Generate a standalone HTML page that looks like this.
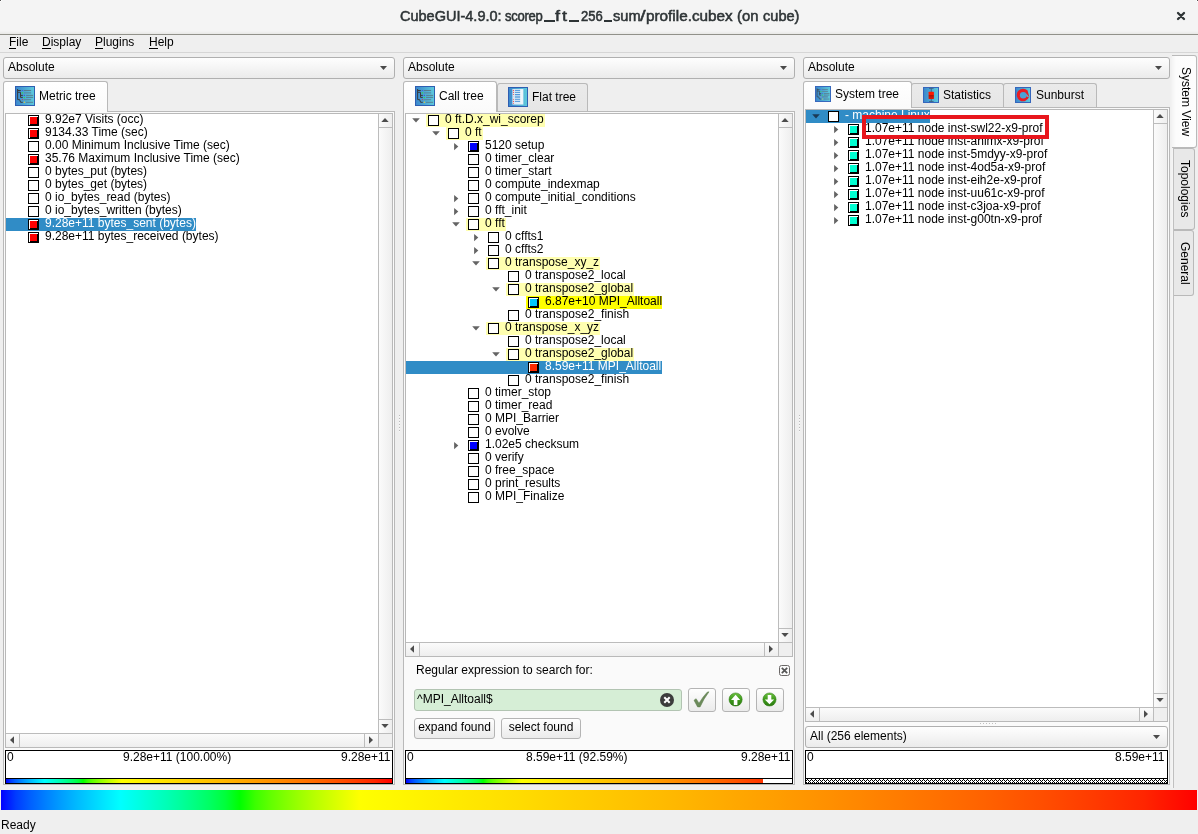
<!DOCTYPE html>
<html><head><meta charset="utf-8"><title>CubeGUI</title>
<style>
*{box-sizing:border-box;margin:0;padding:0}
html,body{width:1198px;height:834px;overflow:hidden;background:#efefef;font-family:"Liberation Sans",sans-serif;font-size:12px;color:#000}
body{position:relative;will-change:transform}
.abs,.t,.ic,.ab,.selrow,.hp,.hy,.combo,.tab,.pane,.tree,.btn,.vbar,.sb,.ln{position:absolute}
.t{white-space:nowrap;line-height:13px;height:13px;font-size:12px}
.w{color:#fff}
.ic{display:block;width:11px;height:11px;border:1px solid #000;background:#fff}
.ic.f{box-shadow:inset 1px 1px 0 #fff,inset -1px -1px 0 #000}
.selrow{background:#308cc6}
.hp{background:#ffffb0;white-space:nowrap;line-height:13px;color:transparent;padding-right:1px}
.hy{background:#ffff00;white-space:nowrap;line-height:13px;color:transparent}
.pad{display:inline-block}
#title{left:0;top:0;width:1198px;height:35px;background:linear-gradient(#f4f4f4 0,#f4f4f4 31px,#e8e8e6 34px);border-bottom:1px solid #91918a}
#titletx{left:0;top:7px;width:1198px;text-align:center;font-size:15px;line-height:18px;color:#2e3436;-webkit-text-stroke:0.3px #2e3436;letter-spacing:0.03px}
#menubar{left:0;top:35px;width:1198px;height:18px;border-bottom:1px solid #d6d6d6;background:#efefef}
.menu{position:absolute;top:36px;line-height:13px;font-size:12px}
.menu u{text-decoration:none;position:relative}.menu u::after{content:'';position:absolute;left:0;right:0;top:13px;height:1px;background:#000}
.combo{height:22px;border:1px solid #b0b0b0;border-radius:3px;background:linear-gradient(#fefefe,#ebebeb);line-height:18px;padding-left:4px}
.pane{border:1px solid #b9b9b9;background:#fafafa}
.tree{border:1px solid #b9b9b9;background:#fff}
.tab{border:1px solid #b9b9b9;border-bottom:none;border-radius:3px 3px 0 0;white-space:nowrap}
.tab.sel{background:linear-gradient(#ffffff,#fafafa)}
.tab.un{background:linear-gradient(#eaeaea,#e6e6e6)}
.sb{background:#f4f4f4}
.sbv{background:linear-gradient(90deg,#fbfbfb,#eeeeee)}
.sbh{background:linear-gradient(#fbfbfb,#eeeeee)}
.ln{background:#bcbcbc}
.btn{border:1px solid #b4b4b4;border-radius:3px;background:linear-gradient(#fefefe,#ebebeb);text-align:center;line-height:17px;white-space:nowrap}
.vbar{border:1px solid #000;background:#fff;height:34px}
.vbar .strip{position:absolute;left:0;right:0;bottom:0;height:5px;border-top:1px solid #000}
.grad{background:linear-gradient(90deg,#0000ff 0.00%,#003bff 1.25%,#0061ff 2.50%,#0080ff 3.75%,#009dff 5.00%,#00b8ff 6.25%,#00d0ff 7.50%,#00e8ff 8.75%,#00ffff 10.00%,#00ffe8 11.25%,#00ffd0 12.50%,#00ffb8 13.75%,#00ff9d 15.00%,#00ff80 16.25%,#00ff61 17.50%,#00ff3b 18.75%,#00ff00 20.00%,#3bff00 21.25%,#61ff00 22.50%,#80ff00 23.75%,#9dff00 25.00%,#b8ff00 26.25%,#d0ff00 27.50%,#e8ff00 28.75%,#ffff00 30.00%,#fff400 34.38%,#ffe800 38.75%,#ffdd00 43.12%,#ffd000 47.50%,#ffc400 51.88%,#ffb800 56.25%,#ffaa00 60.62%,#ff9d00 65.00%,#ff8f00 69.38%,#ff8000 73.75%,#ff7100 78.12%,#ff6100 82.50%,#ff4f00 86.87%,#ff3b00 91.25%,#ff2500 95.62%,#ff0000 100.00%)}
.redbox{position:absolute;left:862px;top:115px;width:187px;height:24px;border:4px solid #e8161c;background:#fff}
.redbox::before{content:"";position:absolute;left:0;top:0;width:64px;height:4px;background:#308cc6}
.tt{position:absolute;top:7px;white-space:nowrap;line-height:18px;font-size:14px;color:#2e3436;-webkit-text-stroke:0.5px #2e3436;transform-origin:0 0}
.vt{position:absolute;white-space:nowrap;line-height:13px;font-size:12px;transform-origin:0 0;transform:rotate(90deg)}
.vtab{position:absolute;border:1px solid #b9b9b9;border-left:none;border-radius:0 3px 3px 0}
</style></head><body>

<div id="title" class="abs"></div>
<span class="tt" style="left:399.70px;transform:scaleX(1.0361);letter-spacing:-0.000px;-webkit-text-stroke-width:0.50px">CubeGUI-4.9.0:</span>
<span class="tt" style="left:505.40px;transform:scaleX(0.9300);letter-spacing:-0.292px;-webkit-text-stroke-width:0.55px">scorep</span>
<span class="tt" style="left:555.40px;transform:scaleX(1.3000);letter-spacing:1.462px;-webkit-text-stroke-width:0.45px">ft</span>
<span class="tt" style="left:580.50px;transform:scaleX(0.9300);letter-spacing:-0.048px;-webkit-text-stroke-width:0.55px">256</span>
<span class="tt" style="left:612.50px;transform:scaleX(1.0462);letter-spacing:-0.000px;-webkit-text-stroke-width:0.50px">sum</span>
<span class="tt" style="left:640.00px;transform:scaleX(1.4500);letter-spacing:0.000px;-webkit-text-stroke-width:0.45px">/</span>
<span class="tt" style="left:645.91px;transform:scaleX(1.0923);letter-spacing:0.000px;-webkit-text-stroke-width:0.50px">profile.cubex</span>
<span class="tt" style="left:736.84px;transform:scaleX(1.0579);letter-spacing:0.000px;-webkit-text-stroke-width:0.50px">(on</span>
<span class="tt" style="left:762.90px;transform:scaleX(1.0412);letter-spacing:0.000px;-webkit-text-stroke-width:0.50px">cube)</span>
<i class="abs" style="left:544px;top:19.5px;width:10.5px;height:2.1px;background:#2e3436"></i>
<i class="abs" style="left:568.5px;top:19.5px;width:10.5px;height:2.1px;background:#2e3436"></i>
<i class="abs" style="left:603.8px;top:19.5px;width:7.9px;height:2.1px;background:#2e3436"></i>
<svg class="abs" style="left:1175px;top:10px" width="12" height="12" viewBox="0 0 12 12"><path d="M3 3 L9 9 M9 3 L3 9" stroke="#2e3436" stroke-width="2.3" stroke-linecap="round"/></svg>

<i class="abs" style="left:0;top:0;width:2px;height:2px;background:#fff"></i><i class="abs" style="left:1px;top:1px;width:1px;height:1px;background:#f4f4f4"></i><i class="abs" style="left:0;top:0;width:1px;height:1px;background:#555"></i>
<i class="abs" style="left:1196px;top:0;width:2px;height:2px;background:#fff"></i><i class="abs" style="left:1196px;top:1px;width:1px;height:1px;background:#f4f4f4"></i><i class="abs" style="left:1197px;top:0;width:1px;height:1px;background:#555"></i>
<div id="menubar" class="abs"></div>
<span class="menu" style="left:9px"><u>F</u>ile</span>
<span class="menu" style="left:42px"><u>D</u>isplay</span>
<span class="menu" style="left:95px"><u>P</u>lugins</span>
<span class="menu" style="left:149px"><u>H</u>elp</span>

<!-- LEFT PANEL -->
<div class="combo" style="left:3px;top:57px;width:392px">Absolute</div>
<svg class="ab" style="left:380px;top:66px" width="7" height="4" viewBox="0 0 7 4"><path d="M0 0 L7 0 L3.5 4 Z" fill="#4a4a4a"/></svg>
<div class="pane" style="left:3px;top:111px;width:392px;height:674px"></div>
<div class="tab sel" style="left:3px;top:81px;width:105px;height:31px"></div>
<svg class="ab" style="left:15px;top:86px" width="20" height="20" viewBox="0 0 20 20"><defs><linearGradient id="tg" x1="0" y1="0" x2="1" y2="0"><stop offset="0" stop-color="#3a86cc"/><stop offset="1" stop-color="#5fcbdc"/></linearGradient></defs><rect x="0.5" y="0.5" width="19" height="19" fill="url(#tg)" stroke="#2e5eb2"/><path d="M2.6 3 V13.6 H4.6 L5.6 16.3 H7.8 M2.6 4.5 H5.8 M2.6 6.3 H5.5 V11.4 H7.8 M5.5 9.4 H7.8" fill="none" stroke="#3a3a3c" stroke-width="1"/><g stroke="#58707e" stroke-width="0.8"><path d="M8.9 4.5 H16.1 M11.1 9.4 H18.1 M11.1 11.4 H18.1 M11.1 16.3 H18.1"/></g><g stroke="#5a8ba4" stroke-width="1.4"><path d="M8.9 6.9 H16.1 M8.9 13.6 H16.1"/></g><circle cx="7.4" cy="4.5" r="0.6" fill="#3c55e0"/><circle cx="7.4" cy="6.9" r="0.8" fill="#33d45a"/><circle cx="9.4" cy="9.4" r="0.6" fill="#3c55e0"/><circle cx="9.4" cy="11.4" r="0.75" fill="#2fe04a"/><circle cx="7.4" cy="13.6" r="0.65" fill="#d03a4a"/><circle cx="9.4" cy="16.3" r="0.7" fill="#e6c838"/></svg>
<span class="t" style="left:39px;top:90px">Metric tree</span>
<div class="tree" style="left:5px;top:113px;width:388px;height:635px"></div>
<div class="abs sbv" style="left:379px;top:114px;width:13px;height:619px"></div>
<div class="abs sbh" style="left:6px;top:734px;width:372px;height:13px"></div>
<div class="abs" style="left:379px;top:734px;width:13px;height:13px;background:#efefef"></div>
<div class="ln" style="left:378px;top:114px;width:1px;height:633px"></div>
<div class="ln" style="left:6px;top:733px;width:386px;height:1px"></div>
<div class="ln" style="left:379px;top:127px;width:13px;height:1px"></div>
<div class="ln" style="left:379px;top:719px;width:13px;height:1px"></div>
<div class="ln" style="left:19px;top:734px;width:1px;height:13px"></div>
<div class="ln" style="left:364px;top:734px;width:1px;height:13px"></div>
<svg class="ab" style="left:381px;top:118px" width="8" height="4" viewBox="0 0 8 4"><path d="M0.3 4 L7.7 4 L4 0 Z" fill="#4d4d4d"/></svg>
<svg class="ab" style="left:381px;top:724px" width="8" height="4" viewBox="0 0 8 4"><path d="M0.3 0 L7.7 0 L4 4 Z" fill="#4d4d4d"/></svg>
<svg class="ab" style="left:10px;top:736px" width="4" height="8" viewBox="0 0 4 8"><path d="M4 0.3 L4 7.7 L0 4 Z" fill="#4d4d4d"/></svg>
<svg class="ab" style="left:369px;top:736px" width="4" height="8" viewBox="0 0 4 8"><path d="M0 0.3 L0 7.7 L4 4 Z" fill="#4d4d4d"/></svg>
<i class="ic f" style="left:28px;top:115px;background:#ff0000"></i>
<span class="t" style="left:45px;top:113px">9.92e7 Visits (occ)</span>
<i class="ic f" style="left:28px;top:128px;background:#ff0000"></i>
<span class="t" style="left:45px;top:126px">9134.33 Time (sec)</span>
<i class="ic" style="left:28px;top:141px"></i>
<span class="t" style="left:45px;top:139px">0.00 Minimum Inclusive Time (sec)</span>
<i class="ic f" style="left:28px;top:154px;background:#ff0000"></i>
<span class="t" style="left:45px;top:152px">35.76 Maximum Inclusive Time (sec)</span>
<i class="ic" style="left:28px;top:167px"></i>
<span class="t" style="left:45px;top:165px">0 bytes_put (bytes)</span>
<i class="ic" style="left:28px;top:180px"></i>
<span class="t" style="left:45px;top:178px">0 bytes_get (bytes)</span>
<i class="ic" style="left:28px;top:193px"></i>
<span class="t" style="left:45px;top:191px">0 io_bytes_read (bytes)</span>
<i class="ic" style="left:28px;top:206px"></i>
<span class="t" style="left:45px;top:204px">0 io_bytes_written (bytes)</span>
<div class="selrow" style="left:6px;top:218px;width:190px;height:13px"></div>
<i class="ic f" style="left:28px;top:219px;background:#ff0000"></i>
<span class="t w" style="left:45px;top:217px">9.28e+11 bytes_sent (bytes)</span>
<i class="ic f" style="left:28px;top:232px;background:#ff0000"></i>
<span class="t" style="left:45px;top:230px">9.28e+11 bytes_received (bytes)</span>

<!-- MIDDLE PANEL -->
<div class="combo" style="left:403px;top:57px;width:392px">Absolute</div>
<svg class="ab" style="left:780px;top:66px" width="7" height="4" viewBox="0 0 7 4"><path d="M0 0 L7 0 L3.5 4 Z" fill="#4a4a4a"/></svg>
<div class="pane" style="left:403px;top:111px;width:392px;height:674px"></div>
<div class="tab un" style="left:497px;top:83px;width:91px;height:28px"></div>
<div class="tab sel" style="left:403px;top:81px;width:94px;height:31px"></div>
<svg class="ab" style="left:415px;top:86px" width="20" height="20" viewBox="0 0 20 20"><defs><linearGradient id="tg" x1="0" y1="0" x2="1" y2="0"><stop offset="0" stop-color="#3a86cc"/><stop offset="1" stop-color="#5fcbdc"/></linearGradient></defs><rect x="0.5" y="0.5" width="19" height="19" fill="url(#tg)" stroke="#2e5eb2"/><path d="M2.6 3 V13.6 H4.6 L5.6 16.3 H7.8 M2.6 4.5 H5.8 M2.6 6.3 H5.5 V11.4 H7.8 M5.5 9.4 H7.8" fill="none" stroke="#3a3a3c" stroke-width="1"/><g stroke="#58707e" stroke-width="0.8"><path d="M8.9 4.5 H16.1 M11.1 9.4 H18.1 M11.1 11.4 H18.1 M11.1 16.3 H18.1"/></g><g stroke="#5a8ba4" stroke-width="1.4"><path d="M8.9 6.9 H16.1 M8.9 13.6 H16.1"/></g><circle cx="7.4" cy="4.5" r="0.6" fill="#3c55e0"/><circle cx="7.4" cy="6.9" r="0.8" fill="#33d45a"/><circle cx="9.4" cy="9.4" r="0.6" fill="#3c55e0"/><circle cx="9.4" cy="11.4" r="0.75" fill="#2fe04a"/><circle cx="7.4" cy="13.6" r="0.65" fill="#d03a4a"/><circle cx="9.4" cy="16.3" r="0.7" fill="#e6c838"/></svg>
<svg class="ab" style="left:508px;top:87px" width="20" height="20" viewBox="0 0 20 20"><rect x="0.5" y="0.5" width="19" height="19" fill="url(#tg)" stroke="#2e5eb2"/><rect x="4.4" y="2" width="11" height="15.6" fill="#dcecf8"/><rect x="12.3" y="2.6" width="2.6" height="14.4" fill="#eef6fb"/><g stroke="#3f8fd8" stroke-width="0.9"><path d="M6.9 3.4 H12.1 M6.9 5.4 H12.1 M6.9 7.5 H12.1 M6.9 12.3 H12.1 M6.9 14.4 H12.1"/></g><rect x="6.9" y="8.6" width="5.2" height="2.4" fill="#7fb4e4"/><g fill="#f04545"><circle cx="5.4" cy="3.4" r="0.55"/><circle cx="5.4" cy="5.4" r="0.55"/><circle cx="5.4" cy="7.5" r="0.55"/><circle cx="5.4" cy="9.8" r="0.4" opacity="0.6"/><circle cx="5.4" cy="12.3" r="0.55"/><circle cx="5.4" cy="14.4" r="0.55"/><circle cx="5.4" cy="16.3" r="0.55"/></g></svg>
<span class="t" style="left:439px;top:90px">Call tree</span>
<span class="t" style="left:532px;top:91px">Flat tree</span>
<div class="tree" style="left:405px;top:113px;width:388px;height:544px"></div>
<div class="abs sbv" style="left:779px;top:114px;width:13px;height:528px"></div>
<div class="abs sbh" style="left:406px;top:643px;width:372px;height:13px"></div>
<div class="abs" style="left:779px;top:643px;width:13px;height:13px;background:#efefef"></div>
<div class="ln" style="left:778px;top:114px;width:1px;height:542px"></div>
<div class="ln" style="left:406px;top:642px;width:386px;height:1px"></div>
<div class="ln" style="left:779px;top:127px;width:13px;height:1px"></div>
<div class="ln" style="left:779px;top:628px;width:13px;height:1px"></div>
<div class="ln" style="left:419px;top:643px;width:1px;height:13px"></div>
<div class="ln" style="left:764px;top:643px;width:1px;height:13px"></div>
<svg class="ab" style="left:781px;top:118px" width="8" height="4" viewBox="0 0 8 4"><path d="M0.3 4 L7.7 4 L4 0 Z" fill="#4d4d4d"/></svg>
<svg class="ab" style="left:781px;top:633px" width="8" height="4" viewBox="0 0 8 4"><path d="M0.3 0 L7.7 0 L4 4 Z" fill="#4d4d4d"/></svg>
<svg class="ab" style="left:410px;top:645px" width="4" height="8" viewBox="0 0 4 8"><path d="M4 0.3 L4 7.7 L0 4 Z" fill="#4d4d4d"/></svg>
<svg class="ab" style="left:769px;top:645px" width="4" height="8" viewBox="0 0 4 8"><path d="M0 0.3 L0 7.7 L4 4 Z" fill="#4d4d4d"/></svg>
<div class="hp" style="left:426px;top:114px;height:13px" ><span class="pad" style="padding-left:19px">0 ft.D.x_wi_scorep</span></div>
<svg class="ab" style="left:412px;top:118px" width="8" height="5" viewBox="0 0 8 5"><path d="M0.2 0.2 L7.8 0.2 L4 4.5 Z" fill="#646464"/></svg>
<i class="ic" style="left:428px;top:115px"></i>
<span class="t" style="left:445px;top:113px">0 ft.D.x_wi_scorep</span>
<div class="hp" style="left:446px;top:127px;height:13px" ><span class="pad" style="padding-left:19px">0 ft</span></div>
<svg class="ab" style="left:432px;top:131px" width="8" height="5" viewBox="0 0 8 5"><path d="M0.2 0.2 L7.8 0.2 L4 4.5 Z" fill="#646464"/></svg>
<i class="ic" style="left:448px;top:128px"></i>
<span class="t" style="left:465px;top:126px">0 ft</span>
<svg class="ab" style="left:454px;top:143px" width="5" height="8" viewBox="0 0 5 8"><path d="M0.1 0 L0.1 7.2 L4.3 3.6 Z" fill="#646464"/></svg>
<i class="ic f" style="left:468px;top:141px;background:#0000ff"></i>
<span class="t" style="left:485px;top:139px">5120 setup</span>
<i class="ic" style="left:468px;top:154px"></i>
<span class="t" style="left:485px;top:152px">0 timer_clear</span>
<i class="ic" style="left:468px;top:167px"></i>
<span class="t" style="left:485px;top:165px">0 timer_start</span>
<i class="ic" style="left:468px;top:180px"></i>
<span class="t" style="left:485px;top:178px">0 compute_indexmap</span>
<svg class="ab" style="left:454px;top:195px" width="5" height="8" viewBox="0 0 5 8"><path d="M0.1 0 L0.1 7.2 L4.3 3.6 Z" fill="#646464"/></svg>
<i class="ic" style="left:468px;top:193px"></i>
<span class="t" style="left:485px;top:191px">0 compute_initial_conditions</span>
<svg class="ab" style="left:454px;top:208px" width="5" height="8" viewBox="0 0 5 8"><path d="M0.1 0 L0.1 7.2 L4.3 3.6 Z" fill="#646464"/></svg>
<i class="ic" style="left:468px;top:206px"></i>
<span class="t" style="left:485px;top:204px">0 fft_init</span>
<div class="hp" style="left:466px;top:218px;height:13px" ><span class="pad" style="padding-left:19px">0 fft</span></div>
<svg class="ab" style="left:452px;top:222px" width="8" height="5" viewBox="0 0 8 5"><path d="M0.2 0.2 L7.8 0.2 L4 4.5 Z" fill="#646464"/></svg>
<i class="ic" style="left:468px;top:219px"></i>
<span class="t" style="left:485px;top:217px">0 fft</span>
<svg class="ab" style="left:474px;top:234px" width="5" height="8" viewBox="0 0 5 8"><path d="M0.1 0 L0.1 7.2 L4.3 3.6 Z" fill="#646464"/></svg>
<i class="ic" style="left:488px;top:232px"></i>
<span class="t" style="left:505px;top:230px">0 cffts1</span>
<svg class="ab" style="left:474px;top:247px" width="5" height="8" viewBox="0 0 5 8"><path d="M0.1 0 L0.1 7.2 L4.3 3.6 Z" fill="#646464"/></svg>
<i class="ic" style="left:488px;top:245px"></i>
<span class="t" style="left:505px;top:243px">0 cffts2</span>
<div class="hp" style="left:486px;top:257px;height:13px" ><span class="pad" style="padding-left:19px">0 transpose_xy_z</span></div>
<svg class="ab" style="left:472px;top:261px" width="8" height="5" viewBox="0 0 8 5"><path d="M0.2 0.2 L7.8 0.2 L4 4.5 Z" fill="#646464"/></svg>
<i class="ic" style="left:488px;top:258px"></i>
<span class="t" style="left:505px;top:256px">0 transpose_xy_z</span>
<i class="ic" style="left:508px;top:271px"></i>
<span class="t" style="left:525px;top:269px">0 transpose2_local</span>
<div class="hp" style="left:506px;top:283px;height:13px" ><span class="pad" style="padding-left:19px">0 transpose2_global</span></div>
<svg class="ab" style="left:492px;top:287px" width="8" height="5" viewBox="0 0 8 5"><path d="M0.2 0.2 L7.8 0.2 L4 4.5 Z" fill="#646464"/></svg>
<i class="ic" style="left:508px;top:284px"></i>
<span class="t" style="left:525px;top:282px">0 transpose2_global</span>
<div class="hy" style="left:526px;top:296px;height:13px" ><span class="pad" style="padding-left:19px">6.87e+10 MPI_Alltoall</span></div>
<i class="ic f" style="left:528px;top:297px;background:#00c8ff"></i>
<span class="t" style="left:545px;top:295px">6.87e+10 MPI_Alltoall</span>
<i class="ic" style="left:508px;top:310px"></i>
<span class="t" style="left:525px;top:308px">0 transpose2_finish</span>
<div class="hp" style="left:486px;top:322px;height:13px" ><span class="pad" style="padding-left:19px">0 transpose_x_yz</span></div>
<svg class="ab" style="left:472px;top:326px" width="8" height="5" viewBox="0 0 8 5"><path d="M0.2 0.2 L7.8 0.2 L4 4.5 Z" fill="#646464"/></svg>
<i class="ic" style="left:488px;top:323px"></i>
<span class="t" style="left:505px;top:321px">0 transpose_x_yz</span>
<i class="ic" style="left:508px;top:336px"></i>
<span class="t" style="left:525px;top:334px">0 transpose2_local</span>
<div class="hp" style="left:506px;top:348px;height:13px" ><span class="pad" style="padding-left:19px">0 transpose2_global</span></div>
<svg class="ab" style="left:492px;top:352px" width="8" height="5" viewBox="0 0 8 5"><path d="M0.2 0.2 L7.8 0.2 L4 4.5 Z" fill="#646464"/></svg>
<i class="ic" style="left:508px;top:349px"></i>
<span class="t" style="left:525px;top:347px">0 transpose2_global</span>
<div class="selrow" style="left:406px;top:361px;width:256px;height:13px"></div>
<i class="ic f" style="left:528px;top:362px;background:#ff2a00"></i>
<span class="t w" style="left:545px;top:360px">8.59e+11 MPI_Alltoall</span>
<i class="ic" style="left:508px;top:375px"></i>
<span class="t" style="left:525px;top:373px">0 transpose2_finish</span>
<i class="ic" style="left:468px;top:388px"></i>
<span class="t" style="left:485px;top:386px">0 timer_stop</span>
<i class="ic" style="left:468px;top:401px"></i>
<span class="t" style="left:485px;top:399px">0 timer_read</span>
<i class="ic" style="left:468px;top:414px"></i>
<span class="t" style="left:485px;top:412px">0 MPI_Barrier</span>
<i class="ic" style="left:468px;top:427px"></i>
<span class="t" style="left:485px;top:425px">0 evolve</span>
<svg class="ab" style="left:454px;top:442px" width="5" height="8" viewBox="0 0 5 8"><path d="M0.1 0 L0.1 7.2 L4.3 3.6 Z" fill="#646464"/></svg>
<i class="ic f" style="left:468px;top:440px;background:#0000ff"></i>
<span class="t" style="left:485px;top:438px">1.02e5 checksum</span>
<i class="ic" style="left:468px;top:453px"></i>
<span class="t" style="left:485px;top:451px">0 verify</span>
<i class="ic" style="left:468px;top:466px"></i>
<span class="t" style="left:485px;top:464px">0 free_space</span>
<i class="ic" style="left:468px;top:479px"></i>
<span class="t" style="left:485px;top:477px">0 print_results</span>
<i class="ic" style="left:468px;top:492px"></i>
<span class="t" style="left:485px;top:490px">0 MPI_Finalize</span>
<!-- search -->
<span class="t" style="left:416px;top:664px">Regular expression to search for:</span>
<svg class="abs" style="left:779px;top:665px" width="11" height="11" viewBox="0 0 11 11"><rect x="0.5" y="0.5" width="10" height="10" rx="2" fill="#fafafa" stroke="#6a6766"/><path d="M2.8 2.8 L8.2 8.2 M8.2 2.8 L2.8 8.2" stroke="#555" stroke-width="1.7"/></svg>
<div class="abs" style="left:414px;top:689px;width:268px;height:22px;border:1px solid #b2c4b2;border-radius:3px;background:#d6eed6"></div>
<span class="t" style="left:417px;top:693px">^MPI_Alltoall$</span>
<svg class="abs" style="left:660px;top:693px" width="14" height="14" viewBox="0 0 14 14"><circle cx="7" cy="7" r="7" fill="#3c3c3c"/><path d="M4.3 4.3 L9.7 9.7 M9.7 4.3 L4.3 9.7" stroke="#fff" stroke-width="2"/></svg>
<div class="btn" style="left:688px;top:688px;width:28px;height:24px"></div>
<div class="btn" style="left:722px;top:688px;width:28px;height:24px"></div>
<div class="btn" style="left:756px;top:688px;width:28px;height:24px"></div>
<svg class="abs" style="left:692px;top:690px" width="20" height="20" viewBox="0 0 20 20"><path d="M2.0 10.3 L4.1 8.7 L7.0 13.2 Q11 6.5 15.2 2.2 L17.0 1.8 Q11.6 9 8.1 16.9 L5.6 16.9 Z" fill="#6b8a5a" stroke="#5a7a4a" stroke-width="0.5"/></svg>
<svg class="abs" style="left:728px;top:692px" width="15" height="15" viewBox="0 0 15 15"><defs><linearGradient id="gg" x1="0" y1="0" x2="0" y2="1"><stop offset="0" stop-color="#6cc040"/><stop offset="0.5" stop-color="#3f9a1c"/><stop offset="1" stop-color="#2c7a10"/></linearGradient></defs><circle cx="7.6" cy="7.5" r="6.6" fill="url(#gg)" stroke="#2f7a14" stroke-width="0.5"/><path d="M7.6 2.8 L12.2 7.9 L9.4 7.9 L9.4 12.9 L5.8 12.9 L5.8 7.9 L3.0 7.9 Z" fill="#fff"/></svg>
<svg class="abs" style="left:762px;top:692px" width="15" height="15" viewBox="0 0 15 15"><circle cx="7.5" cy="7.5" r="6.6" fill="url(#gg)" stroke="#2f7a14" stroke-width="0.5"/><path d="M7.5 12.3 L12.2 7.5 L9.3 7.5 L9.3 2.9 L5.7 2.9 L5.7 7.5 L2.8 7.5 Z" fill="#fff"/></svg>
<div class="btn" style="left:414px;top:718px;width:81px;height:21px">expand found</div>
<div class="btn" style="left:501px;top:718px;width:80px;height:21px">select found</div>

<!-- RIGHT PANEL -->
<div class="combo" style="left:803px;top:57px;width:367px">Absolute</div>
<svg class="ab" style="left:1155px;top:66px" width="7" height="4" viewBox="0 0 7 4"><path d="M0 0 L7 0 L3.5 4 Z" fill="#4a4a4a"/></svg>
<div class="pane" style="left:803px;top:107px;width:367px;height:678px"></div>
<div class="tab un" style="left:911px;top:83px;width:93px;height:24px"></div>
<div class="tab un" style="left:1003px;top:83px;width:94px;height:24px"></div>
<div class="tab sel" style="left:803px;top:81px;width:109px;height:27px"></div>
<svg class="ab" style="left:815px;top:86px" width="16" height="16" viewBox="0 0 20 20"><rect x="0.6" y="0.6" width="18.8" height="18.8" fill="url(#tg)" stroke="#3666bc" stroke-width="1.25"/><path d="M2.6 3 V13.6 H4.6 L5.6 16.3 H7.8 M2.6 4.5 H5.8 M2.6 6.3 H5.5 V11.4 H7.8 M5.5 9.4 H7.8" fill="none" stroke="#3a3a3c" stroke-width="1" opacity="0.8"/><g stroke="#58707e" stroke-width="0.8"><path d="M8.9 4.5 H16.1 M11.1 9.4 H18.1 M11.1 11.4 H18.1 M11.1 16.3 H18.1"/></g><g stroke="#5a8ba4" stroke-width="1.4"><path d="M8.9 6.9 H16.1 M8.9 13.6 H16.1"/></g><circle cx="7.4" cy="4.5" r="0.6" fill="#3c55e0"/><circle cx="7.4" cy="6.9" r="0.8" fill="#33d45a"/><circle cx="9.4" cy="9.4" r="0.6" fill="#3c55e0"/><circle cx="9.4" cy="11.4" r="0.75" fill="#2fe04a"/><circle cx="7.4" cy="13.6" r="0.65" fill="#9a8ac0"/><circle cx="9.4" cy="16.3" r="0.7" fill="#e6c838"/></svg>
<svg class="ab" style="left:923px;top:87px" width="16" height="16" viewBox="0 0 16 16"><defs><linearGradient id="rg" x1="0" y1="0" x2="0" y2="1"><stop offset="0" stop-color="#ff1a00"/><stop offset="0.45" stop-color="#fb1800"/><stop offset="0.5" stop-color="#b01404"/><stop offset="1" stop-color="#e01808"/></linearGradient></defs><rect x="0.5" y="0.5" width="15" height="15" fill="url(#tg)" stroke="#3666bc"/><path d="M8.3 1.3 V14.6 M6 1.4 H10.6 M6 14.5 H10.6" stroke="#3c5a7a" stroke-width="0.8" fill="none"/><rect x="5.6" y="4.7" width="5.3" height="7.2" rx="0.5" fill="url(#rg)"/></svg>
<svg class="ab" style="left:1015px;top:87px" width="16" height="16" viewBox="0 0 16 16"><rect x="0.5" y="0.5" width="15" height="15" fill="url(#tg)" stroke="#3666bc"/><path d="M13.9 10.3 A6.3 6.3 0 1 1 12.6 3.6 L14.3 10 Z" fill="#e81c24"/><circle cx="8.2" cy="8.2" r="3.3" fill="#4aa2d6"/><path d="M11.2 6.6 L14.6 10.4 L11.4 9.6 Z" fill="#55b4d8"/></svg>
<span class="t" style="left:835px;top:88px">System tree</span>
<span class="t" style="left:943px;top:89px">Statistics</span>
<span class="t" style="left:1036px;top:89px">Sunburst</span>
<div class="tree" style="left:805px;top:109px;width:363px;height:613px"></div>
<div class="abs sbv" style="left:1154px;top:110px;width:13px;height:597px"></div>
<div class="abs sbh" style="left:806px;top:708px;width:347px;height:13px"></div>
<div class="abs" style="left:1154px;top:708px;width:13px;height:13px;background:#efefef"></div>
<div class="ln" style="left:1153px;top:110px;width:1px;height:611px"></div>
<div class="ln" style="left:806px;top:707px;width:361px;height:1px"></div>
<div class="ln" style="left:1154px;top:123px;width:13px;height:1px"></div>
<div class="ln" style="left:1154px;top:693px;width:13px;height:1px"></div>
<div class="ln" style="left:819px;top:708px;width:1px;height:13px"></div>
<div class="ln" style="left:1139px;top:708px;width:1px;height:13px"></div>
<svg class="ab" style="left:1156px;top:114px" width="8" height="4" viewBox="0 0 8 4"><path d="M0.3 4 L7.7 4 L4 0 Z" fill="#4d4d4d"/></svg>
<svg class="ab" style="left:1156px;top:698px" width="8" height="4" viewBox="0 0 8 4"><path d="M0.3 0 L7.7 0 L4 4 Z" fill="#4d4d4d"/></svg>
<svg class="ab" style="left:810px;top:710px" width="4" height="8" viewBox="0 0 4 8"><path d="M4 0.3 L4 7.7 L0 4 Z" fill="#4d4d4d"/></svg>
<svg class="ab" style="left:1144px;top:710px" width="4" height="8" viewBox="0 0 4 8"><path d="M0 0.3 L0 7.7 L4 4 Z" fill="#4d4d4d"/></svg>
<div class="selrow" style="left:806px;top:110px;width:124px;height:13px"></div>
<svg class="ab" style="left:812px;top:114px" width="8" height="5" viewBox="0 0 8 5"><path d="M0.2 0.2 L7.8 0.2 L4 4.5 Z" fill="#1b3a55"/></svg>
<i class="ic" style="left:828px;top:111px"></i>
<span class="t w" style="left:845px;top:109px">- machine Linux</span>
<svg class="ab" style="left:834px;top:126px" width="5" height="8" viewBox="0 0 5 8"><path d="M0.1 0 L0.1 7.2 L4.3 3.6 Z" fill="#646464"/></svg>
<i class="ic f" style="left:848px;top:124px;background:#00ffd2"></i>
<span class="t" style="left:865px;top:122px">1.07e+11 node inst-swl22-x9-prof</span>
<svg class="ab" style="left:834px;top:139px" width="5" height="8" viewBox="0 0 5 8"><path d="M0.1 0 L0.1 7.2 L4.3 3.6 Z" fill="#646464"/></svg>
<i class="ic f" style="left:848px;top:137px;background:#00ffd2"></i>
<span class="t" style="left:865px;top:135px">1.07e+11 node inst-ahlmx-x9-prof</span>
<svg class="ab" style="left:834px;top:152px" width="5" height="8" viewBox="0 0 5 8"><path d="M0.1 0 L0.1 7.2 L4.3 3.6 Z" fill="#646464"/></svg>
<i class="ic f" style="left:848px;top:150px;background:#00ffd2"></i>
<span class="t" style="left:865px;top:148px">1.07e+11 node inst-5mdyy-x9-prof</span>
<svg class="ab" style="left:834px;top:165px" width="5" height="8" viewBox="0 0 5 8"><path d="M0.1 0 L0.1 7.2 L4.3 3.6 Z" fill="#646464"/></svg>
<i class="ic f" style="left:848px;top:163px;background:#00ffd2"></i>
<span class="t" style="left:865px;top:161px">1.07e+11 node inst-4od5a-x9-prof</span>
<svg class="ab" style="left:834px;top:178px" width="5" height="8" viewBox="0 0 5 8"><path d="M0.1 0 L0.1 7.2 L4.3 3.6 Z" fill="#646464"/></svg>
<i class="ic f" style="left:848px;top:176px;background:#00ffd2"></i>
<span class="t" style="left:865px;top:174px">1.07e+11 node inst-eih2e-x9-prof</span>
<svg class="ab" style="left:834px;top:191px" width="5" height="8" viewBox="0 0 5 8"><path d="M0.1 0 L0.1 7.2 L4.3 3.6 Z" fill="#646464"/></svg>
<i class="ic f" style="left:848px;top:189px;background:#00ffd2"></i>
<span class="t" style="left:865px;top:187px">1.07e+11 node inst-uu61c-x9-prof</span>
<svg class="ab" style="left:834px;top:204px" width="5" height="8" viewBox="0 0 5 8"><path d="M0.1 0 L0.1 7.2 L4.3 3.6 Z" fill="#646464"/></svg>
<i class="ic f" style="left:848px;top:202px;background:#00ffd2"></i>
<span class="t" style="left:865px;top:200px">1.07e+11 node inst-c3joa-x9-prof</span>
<svg class="ab" style="left:834px;top:217px" width="5" height="8" viewBox="0 0 5 8"><path d="M0.1 0 L0.1 7.2 L4.3 3.6 Z" fill="#646464"/></svg>
<i class="ic f" style="left:848px;top:215px;background:#00ffd2"></i>
<span class="t" style="left:865px;top:213px">1.07e+11 node inst-g00tn-x9-prof</span>
<div class="redbox"></div>
<span class="t" style="left:865px;top:122px">1.07e+11 node inst-swl22-x9-prof</span>
<div class="combo" style="left:805px;top:726px;width:363px">All (256 elements)</div>
<svg class="ab" style="left:1153px;top:735px" width="7" height="4" viewBox="0 0 7 4"><path d="M0 0 L7 0 L3.5 4 Z" fill="#4a4a4a"/></svg>

<!-- splitter dots -->
<i class="abs" style="left:399px;top:415px;width:1px;height:1px;background:#bcbcbc;box-shadow:0 1px 0 #f8f8f8"></i>
<i class="abs" style="left:399px;top:418px;width:1px;height:1px;background:#bcbcbc;box-shadow:0 1px 0 #f8f8f8"></i>
<i class="abs" style="left:399px;top:421px;width:1px;height:1px;background:#bcbcbc;box-shadow:0 1px 0 #f8f8f8"></i>
<i class="abs" style="left:399px;top:424px;width:1px;height:1px;background:#bcbcbc;box-shadow:0 1px 0 #f8f8f8"></i>
<i class="abs" style="left:399px;top:427px;width:1px;height:1px;background:#bcbcbc;box-shadow:0 1px 0 #f8f8f8"></i>
<i class="abs" style="left:399px;top:430px;width:1px;height:1px;background:#bcbcbc;box-shadow:0 1px 0 #f8f8f8"></i>
<i class="abs" style="left:799px;top:415px;width:1px;height:1px;background:#bcbcbc;box-shadow:0 1px 0 #f8f8f8"></i>
<i class="abs" style="left:799px;top:418px;width:1px;height:1px;background:#bcbcbc;box-shadow:0 1px 0 #f8f8f8"></i>
<i class="abs" style="left:799px;top:421px;width:1px;height:1px;background:#bcbcbc;box-shadow:0 1px 0 #f8f8f8"></i>
<i class="abs" style="left:799px;top:424px;width:1px;height:1px;background:#bcbcbc;box-shadow:0 1px 0 #f8f8f8"></i>
<i class="abs" style="left:799px;top:427px;width:1px;height:1px;background:#bcbcbc;box-shadow:0 1px 0 #f8f8f8"></i>
<i class="abs" style="left:799px;top:430px;width:1px;height:1px;background:#bcbcbc;box-shadow:0 1px 0 #f8f8f8"></i>
<i class="abs" style="left:980px;top:723px;width:1px;height:1px;background:#c0c0c0"></i>
<i class="abs" style="left:983px;top:723px;width:1px;height:1px;background:#c0c0c0"></i>
<i class="abs" style="left:986px;top:723px;width:1px;height:1px;background:#c0c0c0"></i>
<i class="abs" style="left:989px;top:723px;width:1px;height:1px;background:#c0c0c0"></i>
<i class="abs" style="left:992px;top:723px;width:1px;height:1px;background:#c0c0c0"></i>
<i class="abs" style="left:995px;top:723px;width:1px;height:1px;background:#c0c0c0"></i>
<!-- side tabs -->
<div class="abs" style="left:1170px;top:58px;width:3px;height:730px;background:linear-gradient(90deg,#efefef,#f5f5f5)"></div>
<div class="ln" style="left:1173px;top:148px;width:1px;height:640px;background:#c0c0c0"></div>
<div class="vtab" style="left:1174px;top:148px;width:21px;height:82px;background:#e8e8e8"></div>
<div class="vtab" style="left:1174px;top:230px;width:20px;height:66px;background:#e8e8e8"></div>
<div class="vtab" style="left:1172px;top:55px;width:25px;height:93px;background:linear-gradient(90deg,#f4f4f4,#fcfcfc 4px,#fdfdfd)"></div>
<span class="vt" style="left:1192px;top:67px">System View</span>
<span class="vt" style="left:1191px;top:160px">Topologies</span>
<span class="vt" style="left:1191px;top:242px">General</span>

<!-- value bars -->
<div class="vbar" style="left:5px;top:750px;width:388px"><div class="strip grad"></div></div>
<div class="vbar" style="left:405px;top:750px;width:388px"><div class="strip"><div class="grad" style="position:absolute;left:0;top:0;height:4px;width:386px"></div><div style="position:absolute;left:357px;top:0;width:29px;height:4px;background:#fff"></div></div></div>
<div class="vbar" style="left:805px;top:750px;width:363px"><div class="strip"><svg style="position:absolute;left:0;top:0" width="361" height="4"><defs><pattern id="dc" width="4" height="4" patternUnits="userSpaceOnUse"><rect width="4" height="4" fill="#fff"/><path d="M1 0h1v1h-1zM0 1h1v1h-1zM2 1h1v1h-1zM3 2h1v1h-1zM0 3h1v1h-1zM2 3h1v1h-1z" fill="#000"/></pattern></defs><rect width="361" height="4" fill="url(#dc)" shape-rendering="crispEdges"/></svg></div></div>
<span class="t" style="left:7px;top:751px">0</span>
<span class="t" style="left:123px;top:751px">9.28e+11 (100.00%)</span>
<span class="t" style="left:341px;top:751px">9.28e+11</span>
<span class="t" style="left:407px;top:751px">0</span>
<span class="t" style="left:526px;top:751px">8.59e+11 (92.59%)</span>
<span class="t" style="left:741px;top:751px">9.28e+11</span>
<span class="t" style="left:807px;top:751px">0</span>
<span class="t" style="left:1115px;top:751px">8.59e+11</span>

<!-- big gradient -->
<div class="abs grad" style="left:1px;top:790px;width:1196px;height:20px"></div>
<span class="t" style="left:1px;top:819px">Ready</span>
</body></html>
